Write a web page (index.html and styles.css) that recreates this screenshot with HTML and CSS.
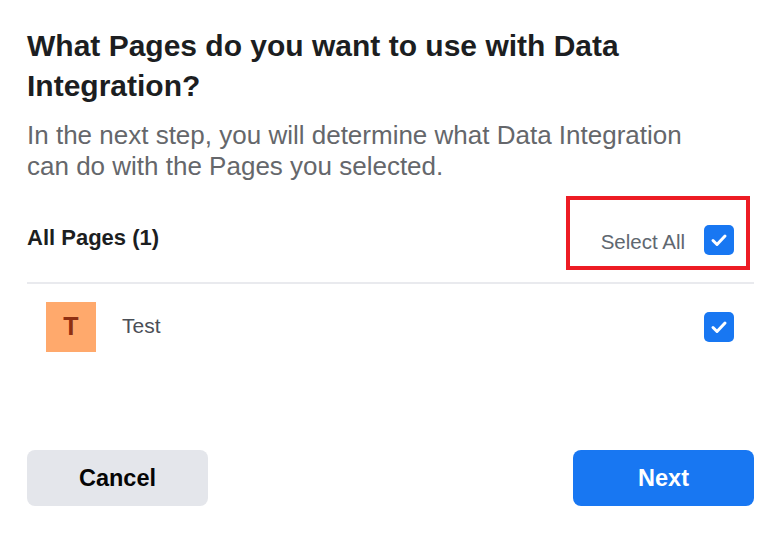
FILE: index.html
```html
<!DOCTYPE html>
<html>
<head>
<meta charset="utf-8">
<link rel="stylesheet" href="styles.css">
</head>
<body>
<div class="dialog">
  <h1 class="title">What Pages do you want to use with Data Integration?</h1>
  <p class="subtitle">In the next step, you will determine what Data Integration can do with the Pages you selected.</p>
  <div class="list-head">
    <div class="all-pages">All Pages (1)</div>
    <div class="select-all">
      <span class="select-label">Select All</span>
      <span class="check"><svg viewBox="0 0 30 30" width="30" height="30"><path d="M9 15.5l4 4 8-8.5" fill="none" stroke="#fff" stroke-width="3" stroke-linecap="round" stroke-linejoin="round"/></svg></span>
    </div>
  </div>
  <div class="page-row">
    <div class="avatar">T</div>
    <div class="page-name">Test</div>
    <span class="check"><svg viewBox="0 0 30 30" width="30" height="30"><path d="M9 15.5l4 4 8-8.5" fill="none" stroke="#fff" stroke-width="3" stroke-linecap="round" stroke-linejoin="round"/></svg></span>
  </div>
  <div class="footer">
    <button class="btn btn-cancel">Cancel</button>
    <button class="btn btn-next">Next</button>
  </div>
</div>
</body>
</html>
```
FILE: styles.css
```css
* { box-sizing: border-box; }
html, body { margin: 0; padding: 0; background: #fff; }
body { font-family: "Liberation Sans", Arial, sans-serif; }
.dialog {
  width: 770px;
  height: 542px;
  padding: 26px 16px 0 27px;
  display: flex;
  flex-direction: column;
}
.title {
  margin: 0;
  font-size: 30px;
  line-height: 40px;
  font-weight: bold;
  color: #1c1e21;
}
.subtitle {
  margin: 14px 0 0;
  font-size: 26px;
  line-height: 31px;
  color: #65676b;
  max-width: 690px;
}
.list-head {
  height: 101.5px;
  display: flex;
  align-items: flex-start;
  justify-content: space-between;
  border-bottom: 2px solid #e9eaee;
}
.all-pages {
  font-size: 22px;
  line-height: 26px;
  font-weight: bold;
  color: #1c1e21;
  margin-top: 42.5px;
}
.select-all {
  display: flex;
  gap: 19px;
  border: 4px solid #ed1c24;
  height: 74px;
  padding: 25px 12px 0 31px;
  align-items: flex-start;
  margin-right: 4px;
  margin-top: 13.5px;
}
.select-label {
  font-size: 20.5px;
  line-height: 24px;
  color: #606770;
  margin-top: 5px;
}
.check {
  width: 30px;
  height: 30px;
  border-radius: 5px;
  background: #1877f2;
  display: flex;
  flex-shrink: 0;
}
.page-row {
  display: flex;
  align-items: center;
  padding: 18px 20px 0 19px;
}
.avatar {
  width: 50px;
  height: 50px;
  background: #ffa96c;
  color: #8f2f12;
  font-size: 25px;
  font-weight: bold;
  display: flex;
  align-items: center;
  justify-content: center;
}
.page-name {
  flex: 1;
  margin-left: 26px;
  font-size: 21px;
  color: #4b4f56;
  margin-top: -1px;
}
.footer {
  margin-top: 98px;
  display: flex;
  justify-content: space-between;
}
.btn {
  width: 181px;
  height: 56px;
  border: none;
  border-radius: 8px;
  font-family: "Liberation Sans", Arial, sans-serif;
  font-size: 23.5px;
  font-weight: bold;
  padding: 0;
  padding-top: 1px;
}
.btn-cancel { background: #e4e6eb; color: #050505; }
.btn-next { background: #1877f2; color: #fff; }
```
